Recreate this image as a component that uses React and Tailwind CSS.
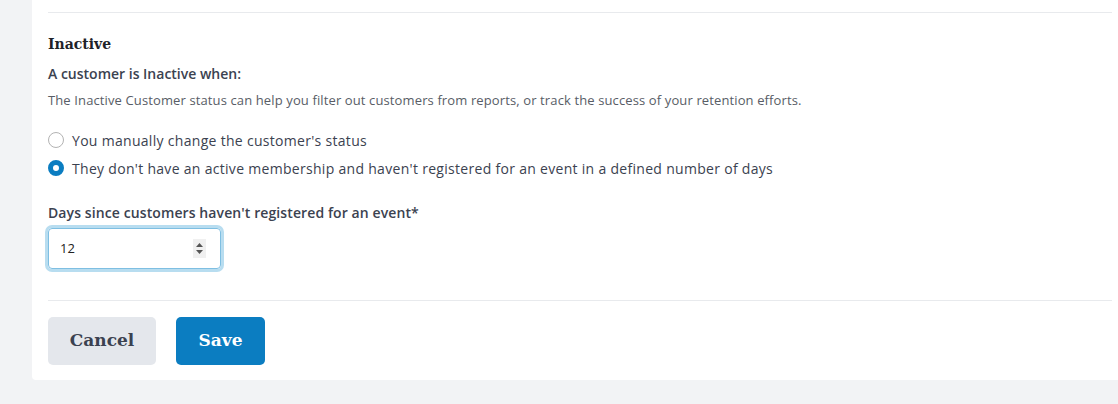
const slab = { fontFamily: '"DejaVu Serif", serif' };

const Radio = ({ checked, label }) => {
  return (
    <label className="flex items-center gap-2 h-7">
      {checked ? (
        <span className="w-4 h-4 rounded-full border-[5px] border-[#0b7dc1] bg-white shrink-0"></span>
      ) : (
        <span className="w-4 h-4 rounded-full border border-[#b3b3b3] bg-white shrink-0"></span>
      )}
      <span className="text-[14px] tracking-[0.3px] text-[#3b4250]">{label}</span>
    </label>
  );
};

const App = () => {
  return (
    <div className="min-h-[404px] bg-[#f2f3f5] font-['Open_Sans',sans-serif]">
      <div className="ml-8 bg-white rounded-bl-[4px] pl-4 pr-[6px] pt-3 pb-[15px]">
        <div className="h-px bg-[#e8eaed]"></div>

        {/* ------------------------------------------------------------------------------ */}
        <div className="pt-[21px] pb-[31px]">
          <h2 className="text-[14px] leading-5 font-bold text-[#1e2228]" style={slab}>Inactive</h2>
          <h3 className="mt-[10px] text-[14px] leading-5 font-semibold text-[#3b4250]">A customer is Inactive when:</h3>
          <p className="mt-[8px] text-[13px] leading-4 tracking-[0.12px] text-[#585d66]">
            The Inactive Customer status can help you filter out customers from reports, or track the success of your retention efforts.
          </p>

          <div className="mt-[18px] flex flex-col">
            <Radio label="You manually change the customer's status" />
            <Radio checked label="They don't have an active membership and haven't registered for an event in a defined number of days" />
          </div>

          <div className="mt-[21px] text-[14px] leading-5 tracking-[0.1px] font-semibold text-[#3b4250]">Days since customers haven't registered for an event*</div>
          <div className="mt-[5px] w-[173px] h-[41px] rounded-[4px] border border-[#7fbfe2] ring-[3px] ring-[#b8ddf0] flex items-center pl-[11px] pr-[14px]">
            <span className="flex-1 text-[13px] text-[#222]">12</span>
            <span className="w-[13px] h-[19px] bg-[#f0f0f0] flex flex-col items-center justify-center gap-[3px]">
              <svg width="7" height="4" viewBox="0 0 7 4"><path d="M3.5 0 L7 4 L0 4 Z" fill="#555" /></svg>
              <svg width="7" height="4" viewBox="0 0 7 4"><path d="M0 0 L7 0 L3.5 4 Z" fill="#555" /></svg>
            </span>
          </div>
        </div>

        <div className="h-px bg-[#e8eaed]"></div>

        <div className="pt-4 flex gap-5">
          <button className="w-[108px] h-12 rounded-[5px] bg-[#e4e7ec] text-[17px] font-bold text-[#3b4250]" style={slab}>Cancel</button>
          <button className="w-[89px] h-12 rounded-[5px] bg-[#0b7dc1] text-[17px] font-bold text-white" style={slab}>Save</button>
        </div>
      </div>
    </div>
  );
};

export default App;
